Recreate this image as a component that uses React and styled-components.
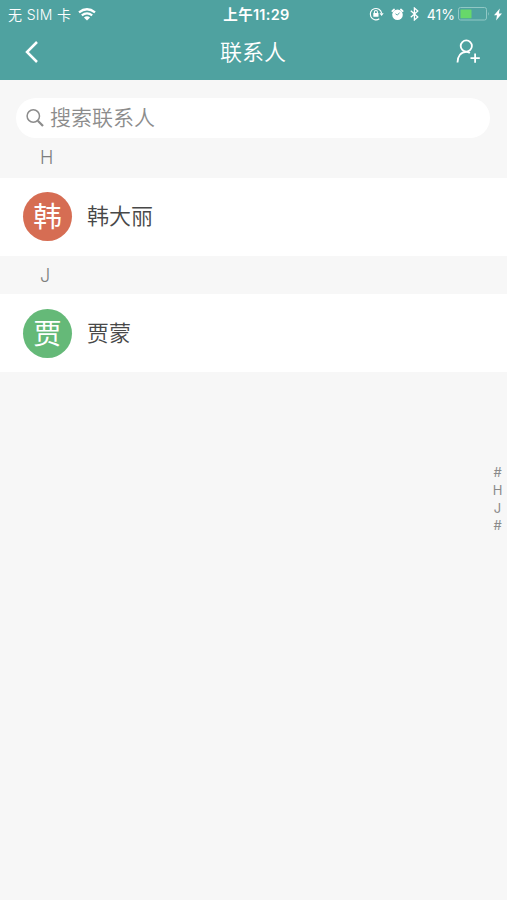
import styled, { createGlobalStyle } from 'styled-components'

const GlobalStyle = createGlobalStyle`
    body {
        margin: 0;
        background: #f7f7f7;
        font-family: Inter, "Noto Sans CJK SC", sans-serif;
    }
`

const Page = styled.div`
    position: relative;
    min-height: 900px;
    overflow: hidden;
    background: #f7f7f7;
`

const Header = styled.header`
    height: 80px;
    color: white;
    background: #4fa2a0;
`

const StatusBar = styled.div`
    display: grid;
    grid-template-columns: 1fr auto 1fr;
    align-items: center;
    height: 27px;
    padding: 0 5px 0 8px;
    font-size: 14px;
    line-height: 27px;
    white-space: nowrap;
`

const Carrier = styled.div`
    display: flex;
    align-items: center;
    gap: 7px;
    font-weight: 350;
    letter-spacing: 0.35px;
`

const Clock = styled.div`
    padding-left: 3px;
    font-size: 14.5px;
    font-weight: 600;
    letter-spacing: 0.3px;
`

const StatusIcons = styled.div`
    display: flex;
    align-items: center;
    justify-content: flex-end;
`

const Percent = styled.span`
    margin: 1px 3px 0 8px;
    font-size: 14px;
`

const NavBar = styled.div`
    display: grid;
    grid-template-columns: 1fr auto 1fr;
    align-items: center;
    height: 50px;
    padding: 0 26px 0 24px;
`

const Title = styled.div`
    padding-left: 1px;
    font-size: 22px;
    font-weight: 350;
    line-height: 50px;
`

const NavButton = styled.button`
    display: flex;
    justify-self: ${props => props.$side};
    padding: 0;
    border: none;
    color: white;
    background: none;
`

const SearchBox = styled.div`
    display: flex;
    align-items: center;
    gap: 5px;
    height: 40px;
    margin: 18px 17px 0 16px;
    padding-left: 10px;
    border-radius: 20px;
    color: #8c8c8c;
    background: white;
    font-size: 21px;
    font-weight: 350;
    line-height: 40px;
`

const GroupTitle = styled.div`
    height: ${props => props.$height};
    padding-left: 40px;
    color: #7e7e7e;
    font-size: 18px;
    font-weight: 350;
    line-height: 39px;
`

const ContactRow = styled.div`
    display: flex;
    align-items: center;
    gap: 15px;
    height: 78px;
    padding: ${props => props.$padding};
    box-sizing: border-box;
    background: white;
`

const Avatar = styled.div`
    width: 49px;
    height: 49px;
    border-radius: 50%;
    color: white;
    background: ${props => props.$color};
    font-size: 28.5px;
    line-height: 49px;
    text-align: center;
`

const Name = styled.div`
    color: #484848;
    font-size: 22px;
    font-weight: 350;
    line-height: 40px;
`

// letters float over the list on the right edge
const IndexBar = styled.div`
    position: absolute;
    top: 464px;
    right: 3px;
    width: 13px;
    color: #8a8a8a;
    font-size: 13px;
    line-height: 17.8px;
    text-align: center;
`

const Gap = styled.span`
    width: ${props => props.$width};
`

const groups = [
    { letter: 'H', height: '40px', name: '韩大丽', color: '#d66d53', padding: '0 23px 2px' },
    { letter: 'J', height: '38px', name: '贾蒙', color: '#65b978', padding: '0 23px' },
]

function WifiIcon() {
    return (
        <svg width="18" height="13" viewBox="0 0 18 13" fill="none" stroke="white" strokeWidth="2.3">
            <path d="M1 4.4Q9-1.8 17 4.4" />
            <path d="M3.8 7.4Q9 3.4 14.2 7.4" />
            <path d="M9 12.5L5.9 9.6Q9 7 12.1 9.6Z" fill="white" stroke="none" />
        </svg>
    )
}

function LockIcon() {
    return (
        <svg width="15" height="14" viewBox="0 0 15 14" fill="none" stroke="white" strokeWidth="1.1">
            <path d="M10.3 11.8A5.7 5.7 0 1 1 12.6 6.2" />
            <path d="M10.5 6.3h4.2l-2.1 2.6z" fill="white" stroke="none" />
            <path d="M5.4 6.4V5a1.5 1.5 0 0 1 3 0v1.4" />
            <rect x="4.3" y="6" width="5.2" height="3.8" rx=".5" fill="white" stroke="none" />
        </svg>
    )
}

function AlarmIcon() {
    return (
        <svg width="13" height="13" viewBox="0 0 13 13" fill="none" strokeLinecap="round">
            <path d="M1.3 3.1L3.1 1.5M11.7 3.1L9.9 1.5" stroke="white" strokeWidth="1.7" />
            <circle cx="6.5" cy="6.8" r="5.3" fill="white" />
            <path d="M4.8 6L6.4 7.1L8.3 4.9" stroke="#4fa2a0" strokeWidth=".9" />
        </svg>
    )
}

function BluetoothIcon() {
    return (
        <svg width="9" height="14" viewBox="0 0 9 14" fill="none" stroke="white" strokeWidth="1.3">
            <path d="M.8 3.8L7.8 10L4.4 13V1L7.8 4L.8 10.2" />
        </svg>
    )
}

function BatteryIcon() {
    return (
        <svg width="32" height="14" viewBox="0 0 32 14">
            <rect x=".5" y=".5" width="28" height="12.5" rx="2" fill="none" stroke="#91c8c5" />
            <rect x="2.5" y="2.5" width="11" height="8.7" rx=".5" fill="#67d86a" />
            <path d="M30 4.7q1.5 2 0 4z" fill="#91c8c5" />
        </svg>
    )
}

function BoltIcon() {
    return (
        <svg width="8" height="13" viewBox="0 0 8 13" fill="white">
            <path d="M5.8 .6L0 7.3h3L2.1 12.4L8 5.6H4.9z" />
        </svg>
    )
}

function BackIcon() {
    return (
        <svg width="16" height="24" viewBox="0 0 16 24" fill="none" stroke="white" strokeWidth="2.5">
            <path d="M13 2L3 12L13 22" />
        </svg>
    )
}

function AddUserIcon() {
    return (
        <svg width="25" height="26" viewBox="0 0 25 26" fill="none" stroke="white" strokeWidth="1.8">
            <circle cx="10.3" cy="7" r="5.6" />
            <path d="M1.5 23.4C1.5 17 5 12.9 10.3 12.9Q12.5 12.9 13.8 14.1" />
            <path d="M14.5 19.1h9.3M19.1 14.4v9.4" />
        </svg>
    )
}

function SearchIcon() {
    return (
        <svg width="19" height="20" viewBox="0 0 19 20" fill="none" stroke="#8c8c8c">
            <circle cx="7.3" cy="8" r="6.2" strokeWidth="1.5" />
            <path d="M11.8 12.7L17 18" strokeWidth="2.2" />
        </svg>
    )
}

function App() {
    return (
        <Page>
            <GlobalStyle />
            <Header>
                <StatusBar>
                    <Carrier>
                        无 SIM 卡
                        <WifiIcon />
                    </Carrier>
                    <Clock>上午11:29</Clock>
                    <StatusIcons>
                        <LockIcon />
                        <Gap $width="7px" />
                        <AlarmIcon />
                        <Gap $width="6px" />
                        <BluetoothIcon />
                        <Percent>41%</Percent>
                        <BatteryIcon />
                        <Gap $width="4px" />
                        <BoltIcon />
                    </StatusIcons>
                </StatusBar>
                <NavBar>
                    <NavButton $side="start" aria-label="返回"><BackIcon /></NavButton>
                    <Title>联系人</Title>
                    <NavButton $side="end" aria-label="添加联系人"><AddUserIcon /></NavButton>
                </NavBar>
            </Header>
            <SearchBox>
                <SearchIcon />
                搜索联系人
            </SearchBox>
            {groups.map(group => (
                <section key={group.letter}>
                    <GroupTitle $height={group.height}>{group.letter}</GroupTitle>
                    <ContactRow $padding={group.padding}>
                        <Avatar $color={group.color}>{group.name[0]}</Avatar>
                        <Name>{group.name}</Name>
                    </ContactRow>
                </section>
            ))}
            <IndexBar>
                {['#', 'H', 'J', '#'].map((letter, i) => (
                    <div key={i}>{letter}</div>
                ))}
            </IndexBar>
        </Page>
    )
}

export default App
